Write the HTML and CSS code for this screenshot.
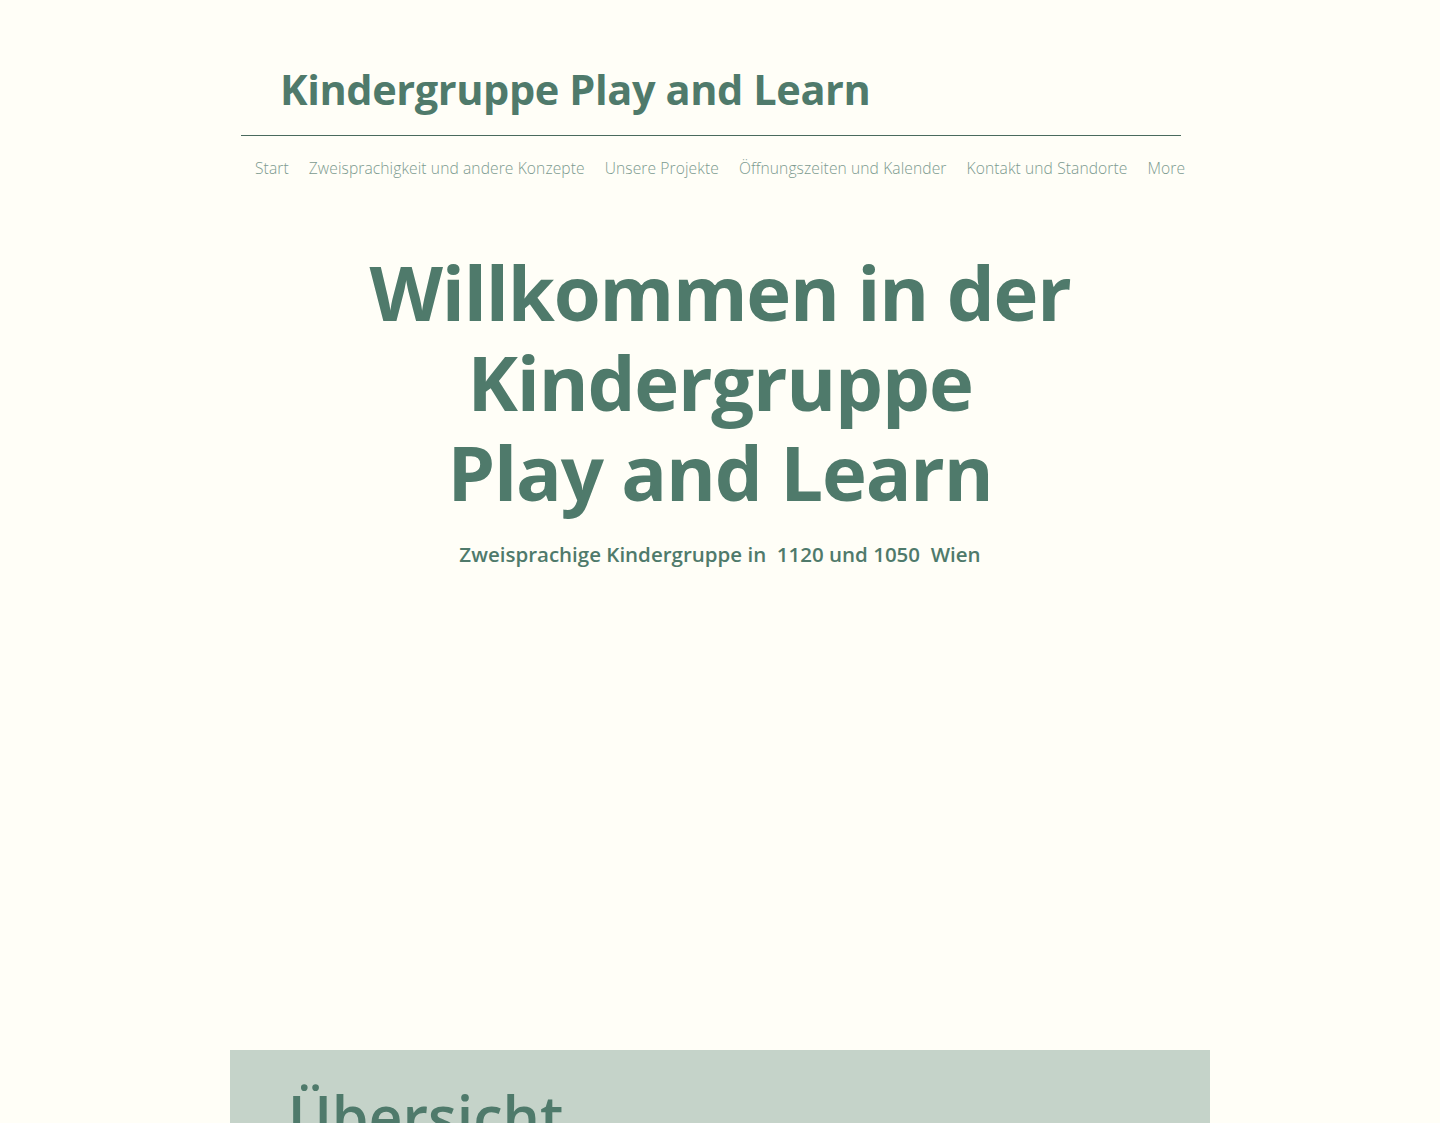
FILE: index.html
```html
<!DOCTYPE html>
<html lang="de">
<head>
<meta charset="utf-8">
<title>Kindergruppe Play and Learn</title>
<link rel="stylesheet" href="styles.css">
</head>
<body>
<div class="page">
  <header class="site-header">
    <div class="site-title">Kindergruppe Play and Learn</div>
    <div class="rule"></div>
    <nav class="main-nav">
      <a href="#">Start</a>
      <a href="#">Zweisprachigkeit und andere Konzepte</a>
      <a href="#">Unsere Projekte</a>
      <a href="#">Öffnungszeiten und Kalender</a>
      <a href="#">Kontakt und Standorte</a>
      <a href="#">More</a>
    </nav>
  </header>
  <section class="hero">
    <h1 class="hero-title"><span class="line">Willkommen in der</span><span class="line">Kindergruppe</span><span class="line">Play and Learn</span></h1>
    <p class="hero-sub">Zweisprachige Kindergruppe in&nbsp; 1120 und 1050&nbsp; Wien</p>
  </section>
  <section class="overview">
    <h2 class="overview-title">Übersicht</h2>
  </section>
</div>
</body>
</html>
```
FILE: styles.css
```css
html, body {
  margin: 0;
  padding: 0;
  background: #fffef7;
  height: 100%;
  overflow: hidden;
}
body {
  font-family: "Open Sans", "Noto Sans", sans-serif;
  color: #4f7a6b;
}
.page {
  width: 980px;
  margin: 0 auto;
}
.site-header {
  padding-top: 62px;
}
.site-title {
  font-family: "Open Sans", sans-serif;
  font-weight: 700;
  font-size: 41.5px;
  line-height: 54px;
  letter-spacing: -0.4px;
  color: #4f7a6b;
  padding-left: 50px;
}
.rule {
  height: 1px;
  background: #4a6a5e;
  margin: 19px 29px 0 11px;
}
.main-nav {
  display: flex;
  gap: 20px;
  padding: 21px 0 0 25px;
  white-space: nowrap;
}
.main-nav a {
  font-family: "Open Sans", sans-serif;
  font-weight: 300;
  font-size: 15.6px;
  line-height: 22px;
  letter-spacing: 0.1px;
  color: #7c9a8f;
  text-decoration: none;
}
.hero {
  padding-top: 68px;
  height: 871px;
  box-sizing: border-box;
  text-align: center;
}
.hero-title {
  margin: 0;
  font-family: "Open Sans", sans-serif;
  font-weight: 700;
  font-size: 76px;
  line-height: 90px;
  letter-spacing: -1.2px;
  color: #4f7a6b;
}
.hero-title .line {
  display: block;
  height: 90px;
  overflow: visible;
}
.hero-sub {
  margin: 23px 0 0;
  font-family: "Open Sans", sans-serif;
  font-weight: 600;
  font-size: 20.5px;
  line-height: 28px;
  color: #4f7a6b;
}
.overview {
  background: #c5d3c9;
  height: 300px;
  padding: 26px 0 0 58px;
  box-sizing: border-box;
}
.overview-title {
  margin: 0;
  font-family: "Open Sans", sans-serif;
  font-weight: 600;
  font-size: 59px;
  line-height: 80px;
  color: #4f7a6b;
}
```
